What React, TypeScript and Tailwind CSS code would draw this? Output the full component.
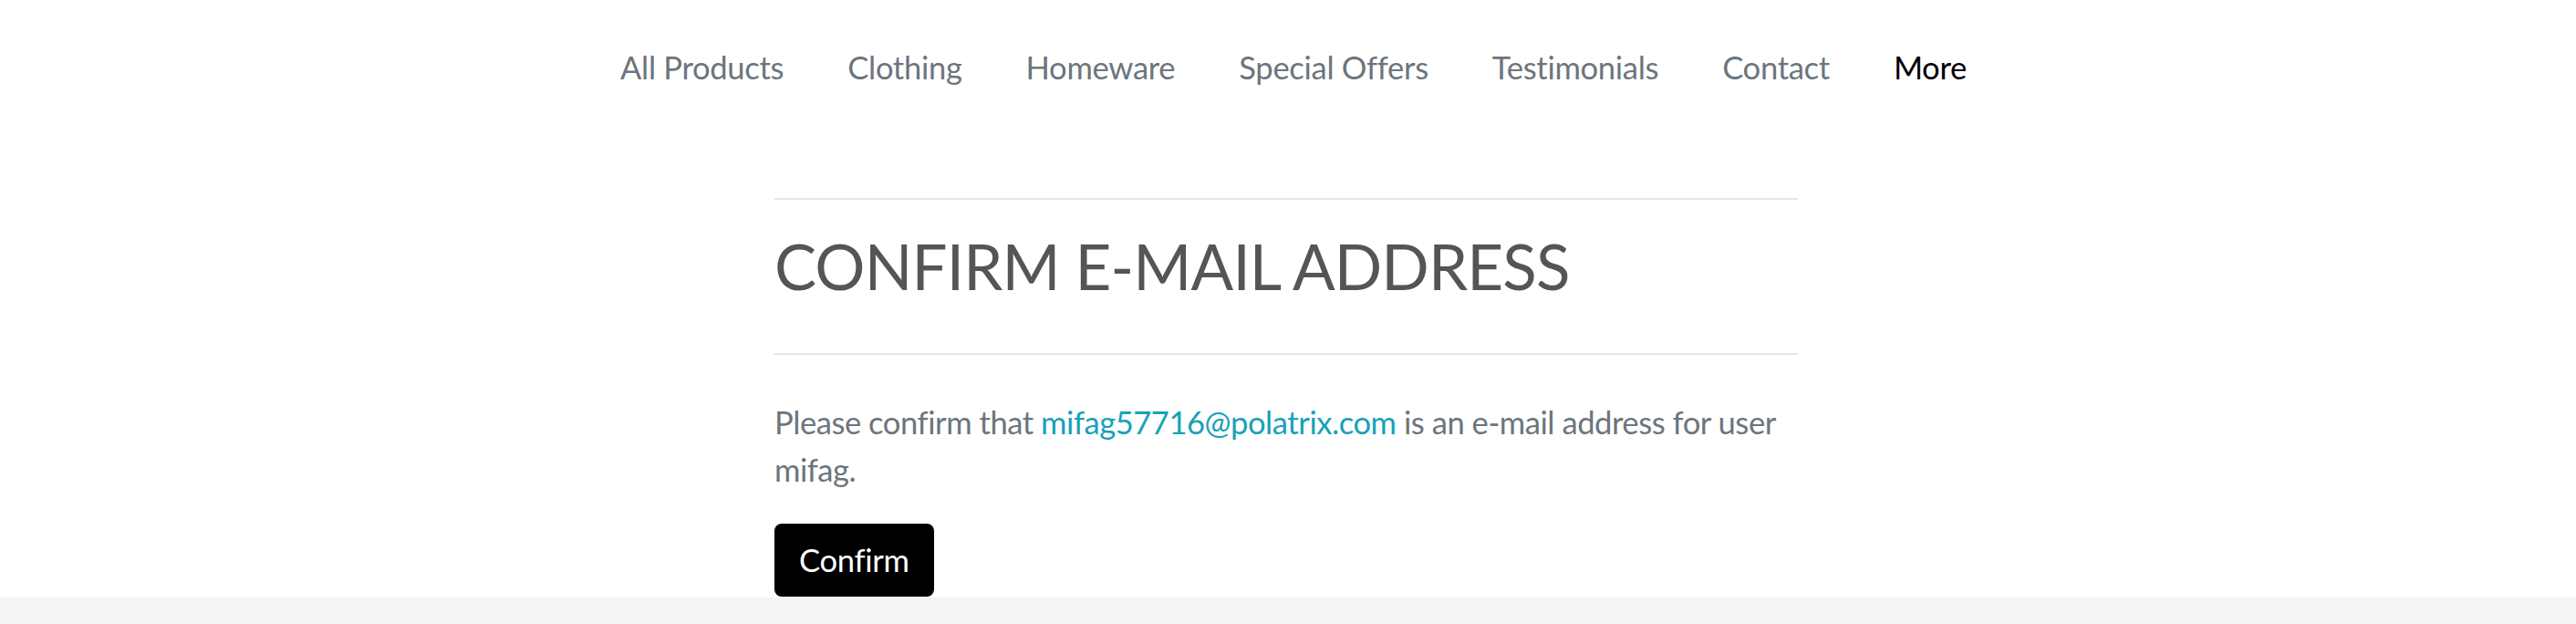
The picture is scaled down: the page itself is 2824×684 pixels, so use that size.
const links = ["All Products", "Clothing", "Homeware", "Special Offers", "Testimonials", "Contact"]

export default function App() {
  return (
    <div className="min-h-screen flex flex-col bg-white font-['Lato','Liberation_Sans',sans-serif] text-[34.56px] leading-[1.5]">
      <nav className="flex justify-center gap-[70px] pt-[48px] pl-[12px] tracking-[-0.3px]">
        {links.map((l) => (
          <a key={l} className="text-[#6c757d]" href="#">
            {l}
          </a>
        ))}
        <a className="text-black" href="#">
          More
        </a>
      </nav>

      <main className="w-[1122px] mx-auto pt-[117px] -translate-x-[2px]">
        <div className="border-t-2 border-[#e6e6e6] pt-[32px] pb-[53px]">
          <h1 className="text-[69px] leading-[1.2] font-normal text-[#555555] uppercase tracking-[-0.85px]">
            Confirm E-mail Address
          </h1>
        </div>
        <div className="border-t-2 border-[#e6e6e6] pt-[48.5px]">
          <p className="text-[#6c757d] tracking-[-0.45px]">
            Please confirm that <a className="text-[#17a2b8]" href="#">mifag57716@polatrix.com</a> is an e-mail address for user mifag.
          </p>
          <button className="mt-[33px] bg-black text-white rounded-[8px] px-[27px] py-[14px] leading-[1.5] tracking-[-0.3px]">
            Confirm
          </button>
        </div>
      </main>

      <footer className="flex-1 bg-[#f4f4f4] mt-[1px]"></footer>
    </div>
  )
}
